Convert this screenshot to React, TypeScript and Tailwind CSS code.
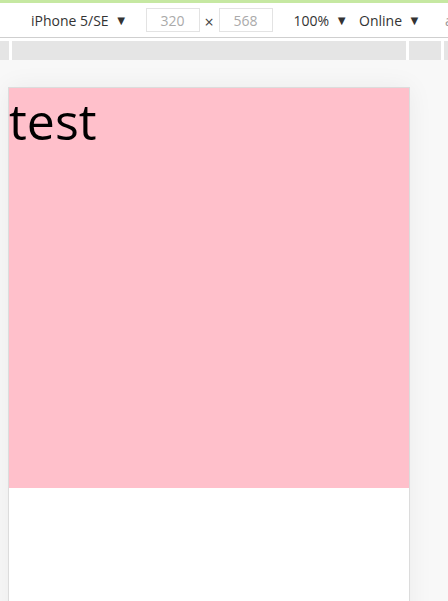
import React from "react"

function Caret() {
  return <span className="ml-[6px] text-[13px] leading-none">▼</span>
}

export default function App(): JSX.Element {
  return (
    <div
      className="w-[448px] h-[601px] overflow-hidden bg-white flex flex-col"
      style={{ fontFamily: '"Open Sans", "Noto Sans", sans-serif' }}
    >
      <div className="h-[3px] shrink-0 bg-[#c6e8a2]" />

      <div className="h-[35px] shrink-0 overflow-hidden border-b border-[#cfcfcf] flex items-center text-[14px] text-[#333] whitespace-nowrap">
        <div className="ml-[31px] shrink-0 flex items-center">
          iPhone 5/SE
          <Caret />
        </div>
        <div className="ml-[18px] shrink-0 w-[54px] h-[24px] border border-[#e3e3e3] flex items-center justify-center text-[#aaa]">
          320
        </div>
        <div className="w-[19px] shrink-0 text-center text-[16px] text-[#444] mt-[4px]">×</div>
        <div className="w-[54px] shrink-0 h-[24px] border border-[#e3e3e3] flex items-center justify-center text-[#aaa]">
          568
        </div>
        <div className="ml-[21px] shrink-0 flex items-center">
          100%
          <Caret />
        </div>
        <div className="ml-[11px] shrink-0 flex items-center">
          Online
          <Caret />
        </div>
        <div className="ml-[24px] shrink-0 text-[#999]">a</div>
      </div>

      <div className="h-[3px] shrink-0" />

      <div className="h-[19px] shrink-0 flex gap-[3px]">
        <div className="w-[9px] shrink-0 bg-[#e5e5e5]" />
        <div className="w-[394px] shrink-0 bg-[#e5e5e5]" />
        <div className="w-[32px] shrink-0 bg-[#e5e5e5]" />
        <div className="flex-1 bg-[#e5e5e5]" />
      </div>

      <div className="flex-1 min-h-0 overflow-hidden bg-[#f8f8f8] pt-[27px] pl-[8px]">
        <div className="w-[402px] h-[600px] border border-[#dcdcdc] bg-white shadow-[0_0_24px_rgba(0,0,0,0.06)]">
          <div className="h-[400px] bg-[#ffc0cb] text-[50px] leading-[66px] text-black">
            test
          </div>
        </div>
      </div>
    </div>
  )
}
